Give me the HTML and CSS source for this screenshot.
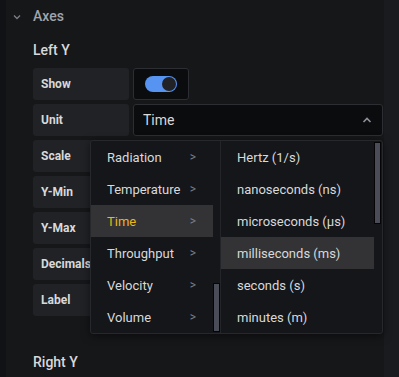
FILE: index.html
```html
<!DOCTYPE html>
<html>
<head>
<meta charset="utf-8">
<link rel="stylesheet" href="styles.css">
</head>
<body>
<div class="page">
  <div class="content">
    <div class="section-head">
      <svg class="chev" width="8" height="6" viewBox="0 0 8 6"><path d="M1 1.5 L4 4.5 L7 1.5" fill="none" stroke="#7b7e86" stroke-width="1.3"/></svg>
      <span>Axes</span>
    </div>
    <div class="subhead">Left Y</div>
    <div class="rows">
      <div class="row"><div class="label">Show</div><div class="switch-box"><div class="switch"><div class="knob"></div></div></div></div>
      <div class="row"><div class="label">Unit</div><div class="select"><span>Time</span><svg width="10" height="6" viewBox="0 0 10 6"><path d="M1.5 5 L5 1.5 L8.5 5" fill="none" stroke="#8e9099" stroke-width="1.6"/></svg></div></div>
      <div class="row"><div class="label">Scale</div></div>
      <div class="row"><div class="label">Y-Min</div></div>
      <div class="row"><div class="label">Y-Max</div></div>
      <div class="row"><div class="label">Decimals</div></div>
      <div class="row"><div class="label">Label</div></div>
    </div>
    <div class="subhead right-y">Right Y</div>
  </div>
  <div class="side"></div>

  <div class="menu">
    <div class="col col-left">
      <div class="items">
        <div class="item"><span>Radiation</span><span class="arr">&gt;</span></div>
        <div class="item"><span>Temperature</span><span class="arr">&gt;</span></div>
        <div class="item active"><span>Time</span><span class="arr">&gt;</span></div>
        <div class="item"><span>Throughput</span><span class="arr">&gt;</span></div>
        <div class="item"><span>Velocity</span><span class="arr">&gt;</span></div>
        <div class="item"><span>Volume</span><span class="arr">&gt;</span></div>
      </div>
      <div class="track"><div class="thumb thumb-left"></div></div>
    </div>
    <div class="col col-right">
      <div class="items">
        <div class="item"><span>Hertz (1/s)</span></div>
        <div class="item"><span>nanoseconds (ns)</span></div>
        <div class="item"><span>microseconds (µs)</span></div>
        <div class="item hover"><span>milliseconds (ms)</span></div>
        <div class="item"><span>seconds (s)</span></div>
        <div class="item"><span>minutes (m)</span></div>
      </div>
      <div class="track"><div class="thumb thumb-right"></div></div>
    </div>
  </div>
</div>
</body>
</html>
```

FILE: styles.css
```css
html, body {
  margin: 0;
  padding: 0;
  background: #111215;
  font-family: Roboto, "Liberation Sans", sans-serif;
  color: #d8d9da;
}
.page {
  position: relative;
  width: 399px;
  height: 377px;
  overflow: hidden;
  display: flex;
}
.content {
  margin-left: 6px;
  width: 378px;
  background: #161719;
  padding-left: 27px;
  box-sizing: border-box;
}
.side {
  flex: 1;
  background: #1a1b1f;
}
.section-head {
  height: 32px;
  display: flex;
  align-items: center;
  margin-left: -27px;
  padding-left: 7px;
  font-size: 14px;
  font-weight: 500;
  color: #9fa4ad;
}
.chev {
  margin-right: 12px;
  margin-top: 2px;
}
.subhead {
  height: 36px;
  display: flex;
  align-items: center;
  font-size: 14px;
  font-weight: 500;
  color: #d8d9da;
}
.rows {
  display: flex;
  flex-direction: column;
  gap: 4px;
}
.row {
  display: flex;
  gap: 4px;
  height: 32px;
}
.label {
  width: 96px;
  background: #202226;
  border-radius: 3px;
  font-size: 12px;
  font-weight: 700;
  color: #d8d9da;
  display: flex;
  align-items: center;
  padding-left: 8px;
  box-sizing: border-box;
}
.switch-box {
  width: 56px;
  background: #0b0c0e;
  border: 1px solid #2c2e33;
  border-radius: 3px;
  box-sizing: border-box;
  display: flex;
  align-items: center;
  justify-content: center;
}
.switch {
  width: 32px;
  height: 16px;
  border-radius: 8px;
  background: #5794f2;
  position: relative;
}
.knob {
  position: absolute;
  right: 1px;
  top: 1px;
  width: 14px;
  height: 14px;
  border-radius: 50%;
  background: #202226;
}
.select {
  width: 250px;
  background: #0b0c0e;
  border: 1px solid #2c2e33;
  border-radius: 3px;
  box-sizing: border-box;
  display: flex;
  align-items: center;
  justify-content: space-between;
  padding: 0 10px 0 9px;
  font-size: 14px;
  color: #d8d9da;
}
.right-y {
  margin-top: 30px;
  height: 32px;
}
.menu {
  position: absolute;
  left: 90px;
  top: 140px;
  width: 293px;
  height: 194px;
  background: #141619;
  border: 1px solid #26282c;
  border-radius: 3px;
  box-sizing: border-box;
  box-shadow: 0 2px 8px rgba(0,0,0,0.5);
  display: flex;
}
.col {
  display: flex;
  height: 192px;
}
.col-left {
  width: 129px;
  border-right: 1px solid #232529;
}
.col-right {
  flex: 1;
}
.items {
  flex: 1;
  display: flex;
  flex-direction: column;
}
.item {
  height: 32px;
  flex: none;
  display: flex;
  align-items: center;
  justify-content: space-between;
  padding: 0 17px 0 16px;
  font-size: 13px;
  color: #d8d9da;
}
.item.active {
  background: #333335;
  color: #ecb51a;
}
.item.hover {
  background: #333335;
}
.arr {
  color: #7b7e86;
  font-size: 12px;
}
.track {
  width: 7px;
  position: relative;
}
.thumb {
  position: absolute;
  left: 0;
  width: 7px;
  background: #4a4d57;
  border: 1px solid #050506;
  box-sizing: border-box;
}
.thumb-left {
  top: 142px;
  height: 49px;
}
.thumb-right {
  top: 1px;
  height: 82px;
}
.col-right .track {
  margin-right: 1px;
}
```
